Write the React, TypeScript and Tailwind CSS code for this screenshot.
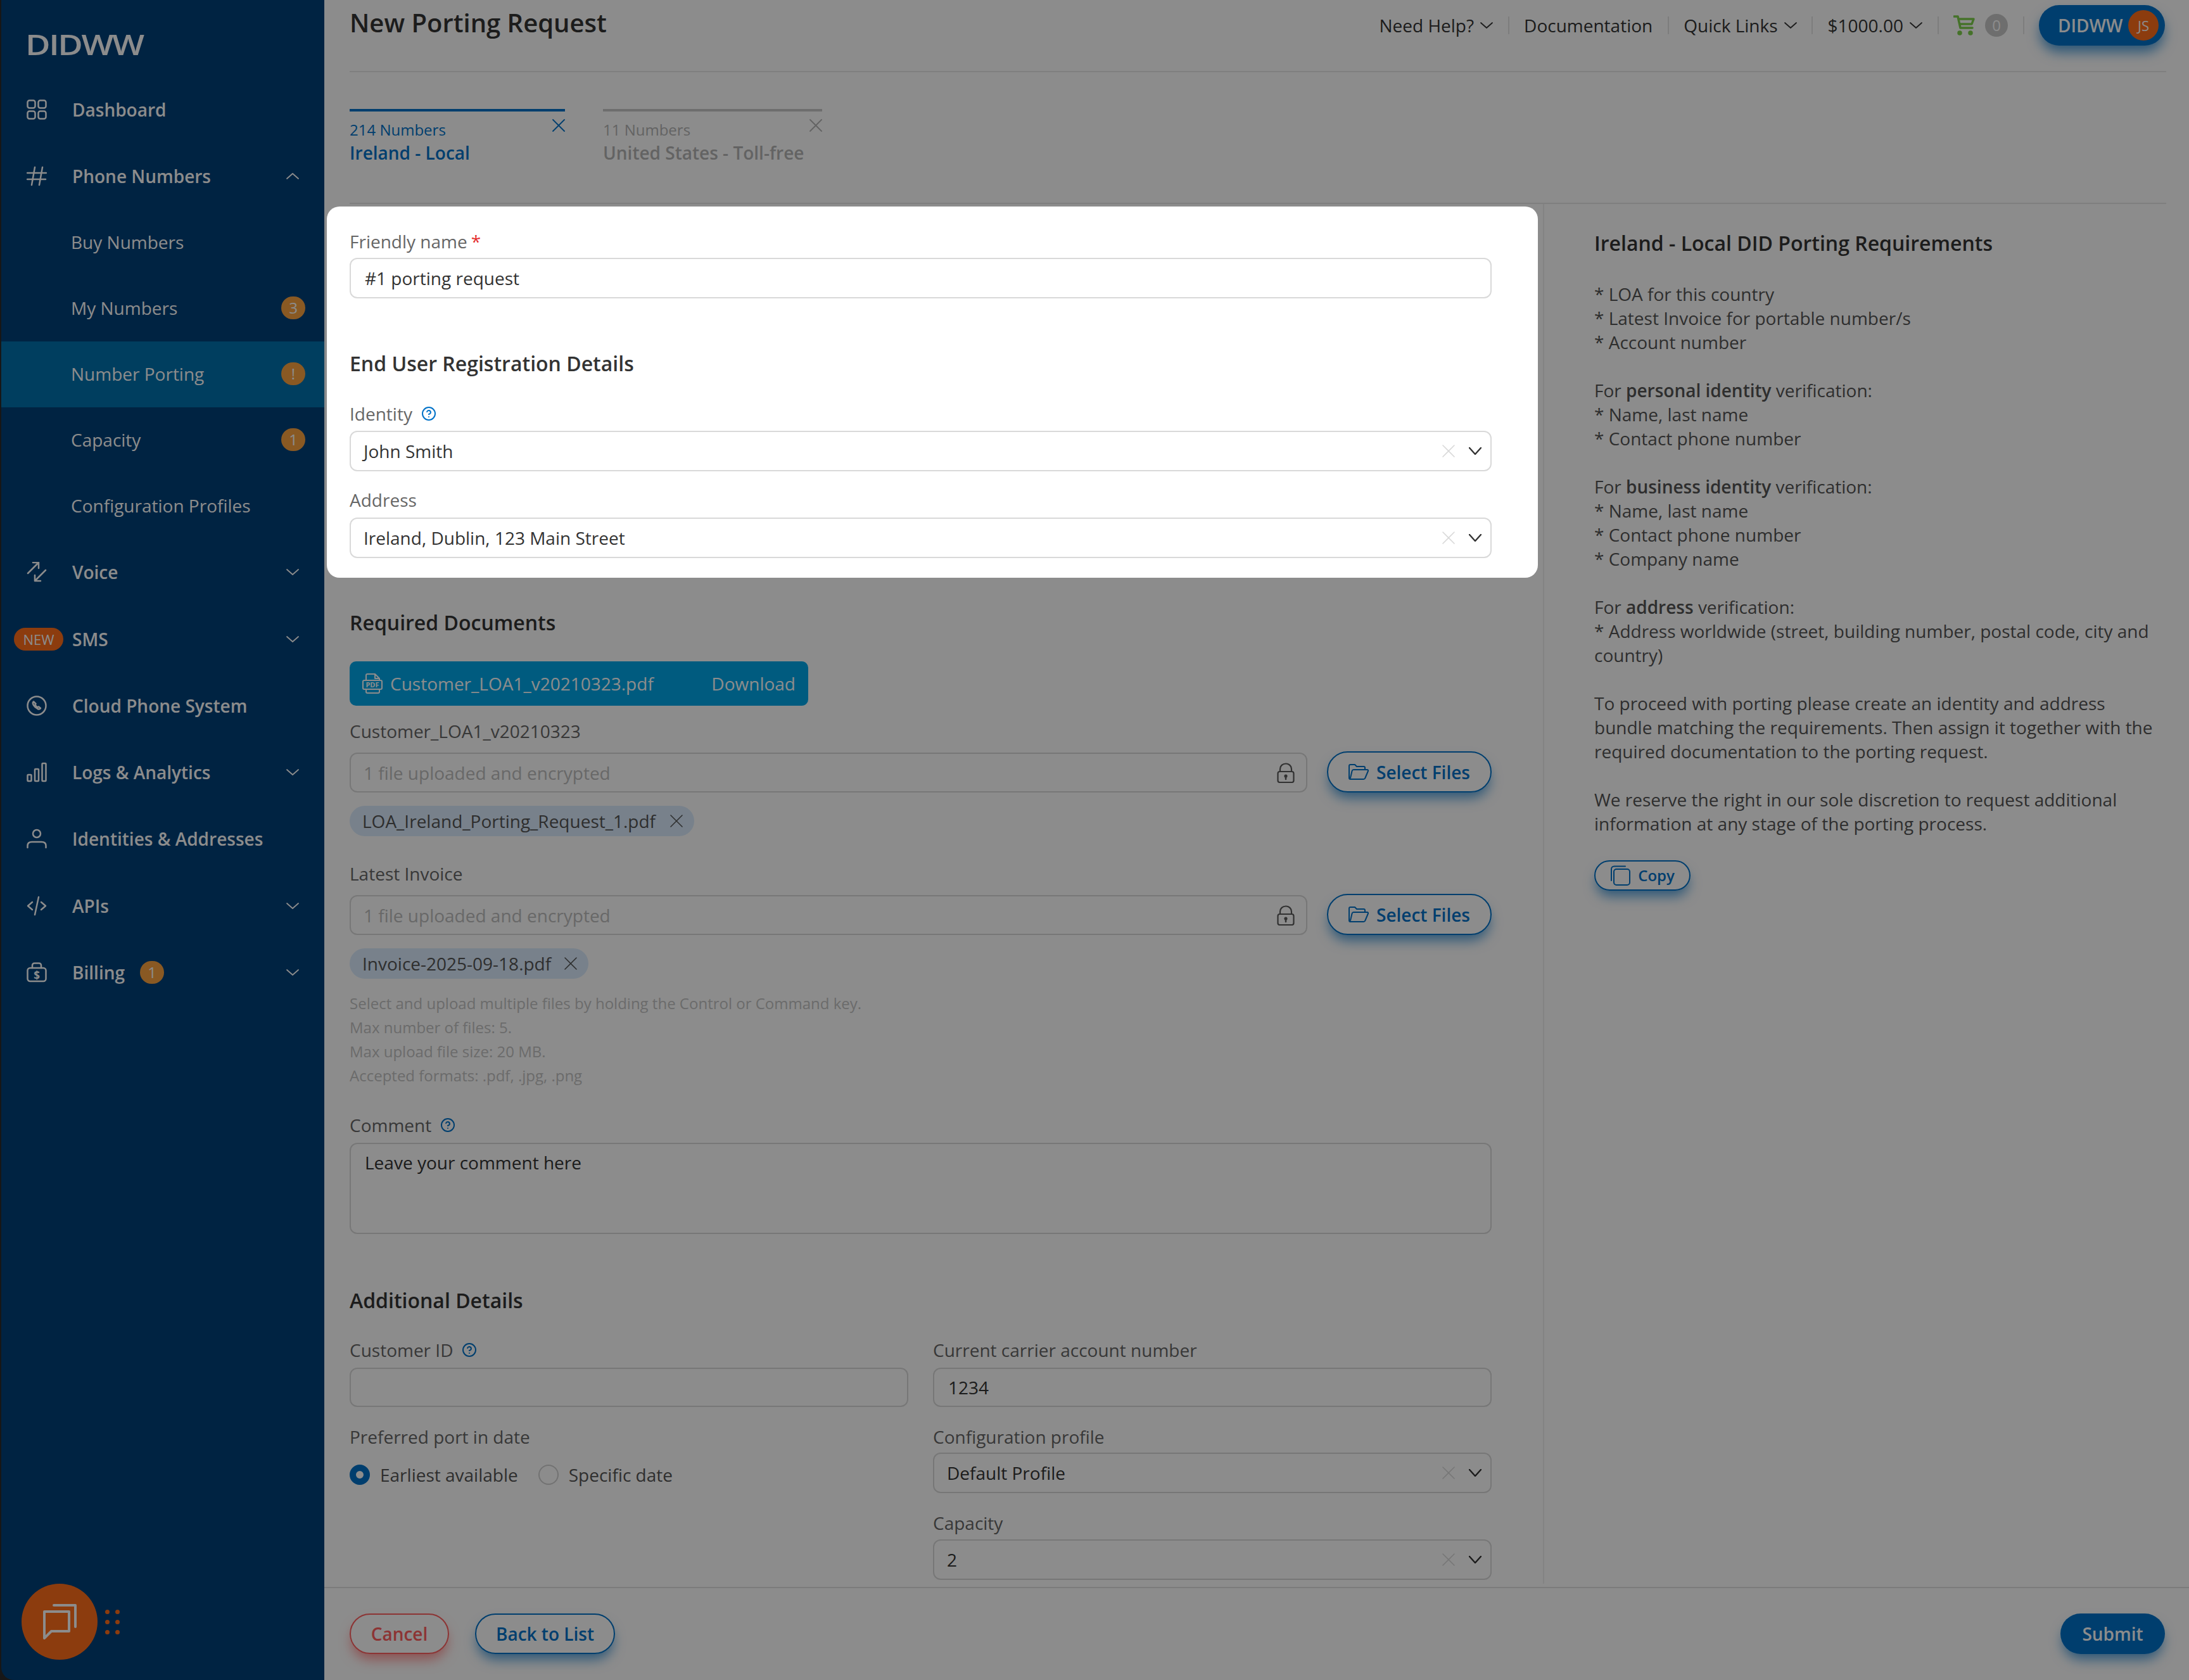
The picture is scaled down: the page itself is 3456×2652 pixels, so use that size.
import React from "react";
import { CircleHelp } from "lucide-react";

const Svg = ({ w = 32, h = 32, children, className = "", sw = 2.5 }: { w?: number; h?: number; children: React.ReactNode; className?: string; sw?: number }) => (
  <svg width={w} height={h} viewBox={`0 0 ${w} ${h}`} fill="none" stroke="currentColor" strokeWidth={sw} strokeLinecap="round" strokeLinejoin="round" className={`shrink-0 ${className}`}>
    {children}
  </svg>
);

const Chev = ({ up = false, w = 20, h = 10, sw = 1.8, className = "" }: { up?: boolean; w?: number; h?: number; sw?: number; className?: string }) => (
  <Svg w={w} h={h} sw={sw} className={className}>
    {up ? <polyline points={`1,${h - 1} ${w / 2},1 ${w - 1},${h - 1}`} /> : <polyline points={`1,1 ${w / 2},${h - 1} ${w - 1},1`} />}
  </Svg>
);

const XIcon = ({ s = 20, sw = 2, className = "" }: { s?: number; sw?: number; className?: string }) => (
  <Svg w={s} h={s} sw={sw} className={className}>
    <line x1="1" y1="1" x2={s - 1} y2={s - 1} />
    <line x1={s - 1} y1="1" x2="1" y2={s - 1} />
  </Svg>
);

const icons: Record<string, React.ReactNode> = {
  dash: (
    <>
      <rect x="1.500" y="1.500" width="12" height="12" rx="3" />
      <rect x="18.500" y="1.500" width="12" height="12" rx="3" />
      <rect x="1.500" y="18.500" width="12" height="12" rx="3" />
      <rect x="18.500" y="18.500" width="12" height="12" rx="3" />
    </>
  ),
  hash: <path d="M1 11h30M1 21h29M13 2 8 30M25 2l-5 28" />,
  voice: <path d="M2 18 19 1M10 1h9v9M30 13 13 30M13 21v9h9" />,
  phone: (
    <>
      <circle cx="16" cy="16" r="14.500" />
      <path d="M11 9.500c-1.500 1-1.500 3 0 5.500 1.500 2.500 3.500 4.500 6.500 6 2 .8 3.500.5 4.500-1l-3-2.500-1.500 1c-1.500-.7-3-2.200-4-4l1-1.500z" />
    </>
  ),
  bars: (
    <>
      <rect x="1.500" y="20" width="6" height="10" rx="1" />
      <rect x="13" y="11" width="6" height="19" rx="1" />
      <rect x="24.500" y="2" width="6" height="28" rx="1" />
    </>
  ),
  user: (
    <>
      <circle cx="16" cy="8" r="6" />
      <path d="M1.500 30v-3c0-4 3-6 7-6h15c4 0 7 2 7 6v3" />
    </>
  ),
  code: <path d="M9 10 2 16l7 6M23 10l7 6-7 6M19 2l-6 28" />,
  bill: (
    <>
      <rect x="1.500" y="9" width="29" height="21" rx="4" />
      <path d="M9 9V5c0-2 1.500-3.500 3.500-3.500h7C21.500 1.500 23 3 23 5v4" />
      <text x="16" y="27" textAnchor="middle" fontSize="17" fontWeight="700" fill="currentColor" stroke="none" fontFamily="'Open Sans',sans-serif">$</text>
    </>
  ),
};

const Badge = ({ t, className = "" }: { t: string; className?: string }) => (
  <span className={`w-[38px] h-[36px] rounded-full bg-[#faa340] text-white text-[24px] leading-[36px] text-center ${className}`}>{t}</span>
);

const Main = ({ icon, label, chev, up, badge, newTag }: { icon?: string; label: string; chev?: boolean; up?: boolean; badge?: string; newTag?: boolean }) => (
  <div className="relative flex items-center h-[105.3px] pl-[40px] pr-[40px] text-white">
    {newTag ? (
      <span className="absolute left-[20px] w-[78px] h-[36px] rounded-full bg-[#ff6e1b] text-[22px] leading-[36px] text-center">NEW</span>
    ) : (
      <Svg>{icon && icons[icon]}</Svg>
    )}
    <span className={`${newTag ? "ml-[72px]" : "ml-[40px]"} text-[28px] font-semibold`}>{label}</span>
    {badge && <Badge t={badge} className="ml-[24px]" />}
    {chev && <Chev up={up} className="ml-auto" />}
  </div>
);

const Sub = ({ label, badge, active }: { label: string; badge?: string; active?: boolean }) => (
  <div className={`flex items-center h-[104px] pb-[2px] pl-[110px] pr-[30px] text-white text-[28px] ${active ? "bg-[#0071ad]" : ""}`}>
    <span>{label}</span>
    {badge && <Badge t={badge} className="ml-auto" />}
  </div>
);

const Label = ({ children, className = "" }: { children: React.ReactNode; className?: string }) => (
  <div className={`text-[28px] leading-[38px] text-[#666] flex items-center ${className}`}>{children}</div>
);

const Help = () => <CircleHelp size={24} strokeWidth={2} className="ml-[14px] text-[#0072c8]" />;

const Field = ({ value, className = "" }: { value?: string; className?: string }) => (
  <div className={`h-[64px] border-2 border-[#d9d9d9] rounded-[12px] bg-white pl-[22px] flex items-center text-[28px] text-[#333] ${className}`}>{value}</div>
);

const Select = ({ value, className = "" }: { value: string; className?: string }) => (
  <div className={`h-[64px] border-2 border-[#d9d9d9] rounded-[12px] bg-white pl-[20px] pr-[14px] flex items-center text-[28px] text-[#333] ${className}`}>
    <span>{value}</span>
    <XIcon s={20} sw={1.6} className="ml-auto text-[#d9d9d9]" />
    <Chev sw={2.4} h={12} className="ml-[22px] text-[#333]" />
  </div>
);

const Upload = ({ tag, tagW, className = "" }: { tag: string; tagW: string; className?: string }) => (
  <>
    <div className={`flex items-end mt-[13px] ${className}`}>
      <div className="w-[1512px] h-[63px] border-2 border-[#d9d9d9] rounded-[12px] pl-[20px] pr-[18px] flex items-center text-[28px] text-[#bdbdbd]">
        <span>1 file uploaded and encrypted</span>
        <Svg w={28} h={32} sw={2.2} className="ml-auto text-[#5a5a5a]">
          <rect x="1.500" y="14" width="25" height="17" rx="3" />
          <path d="M5 14V10c0-5 4-8.500 9-8.500s9 3.500 9 8.500v4" />
          <path d="M14 21v5" strokeWidth="2.500" />
          <circle cx="14" cy="21" r="1.500" fill="currentColor" />
        </Svg>
      </div>
      <button className="ml-[31px] w-[260px] h-[65px] rounded-full border-2 border-[#0072c8] text-[#0072c8] font-semibold text-[28px] flex items-center justify-center gap-[12px] shadow-[0_12px_20px_-4px_rgba(0,114,200,0.7)]">
        <Svg w={32} h={26} sw={2}>
          <path d="M3 24c-1 0-2-1-2-2V3c0-1 1-2 2-2h7l3 3h11c1 0 2 1 2 2v3" />
          <path d="M3 24h21c1 0 2-.7 2.400-2L31 11c.3-1-.3-2-1.500-2H8c-1 0-2 .7-2.400 2L3 22" />
        </Svg>
        Select Files
      </button>
    </div>
    <div className={`mt-[21px] h-[48px] ${tagW} rounded-full bg-[#daecfe] pl-[20px] pr-[18px] flex items-center text-[28px] text-[#555]`}>
      <span>{tag}</span>
      <XIcon s={20} sw={1.6} className="ml-auto text-[#555]" />
    </div>
  </>
);

const H = ({ children, className = "" }: { children: React.ReactNode; className?: string }) => (
  <h2 className={`text-[32px] leading-[44px] font-semibold text-[#333] ${className}`}>{children}</h2>
);

const Tab = ({ top, name, active, w }: { top: string; name: string; active?: boolean; w: string }) => (
  <div className={`${w} border-t-4 ${active ? "border-[#0072c8]" : "border-[#c8c8c8]"} flex justify-between items-start`}>
    <div className={active ? "text-[#0072c8]" : "text-[#b5b5b5]"}>
      <div className="mt-[13px] text-[24px] leading-[32px]">{top}</div>
      <div className="mt-[1px] text-[28px] leading-[38px] font-semibold">{name}</div>
    </div>
    <XIcon s={20} sw={1.8} className={`mt-[12px] ${active ? "text-[#0072c8]" : "text-[#b5b5b5]"}`} />
  </div>
);

const Sep = () => <span className="w-[2px] h-[28px] bg-[#e4e4e4]" />;

const Req = () => (
  <div className="text-[28px] leading-[38px] text-[#555]">
    <p>* LOA for this country</p>
    <p>* Latest Invoice for portable number/s</p>
    <p>* Account number</p>
    <p className="mt-[38px]">For <b className="font-semibold">personal identity</b> verification:</p>
    <p>* Name, last name</p>
    <p>* Contact phone number</p>
    <p className="mt-[38px]">For <b className="font-semibold">business identity</b> verification:</p>
    <p>* Name, last name</p>
    <p>* Contact phone number</p>
    <p>* Company name</p>
    <p className="mt-[38px]">For <b className="font-semibold">address</b> verification:</p>
    <p>* Address worldwide (street, building number, postal code, city and country)</p>
    <p className="mt-[38px]">To proceed with porting please create an identity and address bundle matching the requirements. Then assign it together with the required documentation to the porting request.</p>
    <p className="mt-[38px]">We reserve the right in our sole discretion to request additional information at any stage of the porting process.</p>
  </div>
);

export default function App() {
  return (
    <div className="relative w-[3456px] h-[2652px] overflow-hidden flex bg-[#2a2a2a] font-['Open_Sans',sans-serif] text-[#333]">
      {/* Sidebar */}
      <aside className="ml-[2px] w-[510px] shrink-0 bg-[#004078] rounded-bl-[20px]">
        <div className="h-[120px] pl-[38px] pt-[44px]">
          <div className="text-[45px] leading-[52px] text-white font-semibold tracking-[-2px] origin-left scale-x-[1.2]">DIDWW</div>
        </div>
        <Main icon="dash" label="Dashboard" />
        <Main icon="hash" label="Phone Numbers" chev up />
        <Sub label="Buy Numbers" />
        <Sub label="My Numbers" badge="3" />
        <Sub label="Number Porting" badge="!" active />
        <Sub label="Capacity" badge="1" />
        <Sub label="Configuration Profiles" />
        <Main icon="voice" label="Voice" chev />
        <Main newTag label="SMS" chev />
        <Main icon="phone" label="Cloud Phone System" />
        <Main icon="bars" label="Logs & Analytics" chev />
        <Main icon="user" label="Identities & Addresses" />
        <Main icon="code" label="APIs" chev />
        <Main icon="bill" label="Billing" badge="1" chev />
      </aside>

      {/* Main */}
      <main className="flex-1 min-w-0 bg-white flex flex-col">
        <div className="flex-1 min-h-0 pl-[40px] pr-[36px] overflow-hidden">
          <header className="h-[114px] border-b-2 border-[#e8e8e8] flex justify-between items-start">
            <h1 className="mt-[9px] text-[40px] leading-[54px] font-semibold text-[#333]">New Porting Request</h1>
            <div className="mt-[8px] mr-[2px] h-[64px] flex items-center gap-[23.500px] text-[28px] text-[#333]">
              <span className="flex items-center gap-[10px]">Need Help? <Chev /></span>
              <Sep />
              <span>Documentation</span>
              <Sep />
              <span className="flex items-center gap-[10px]">Quick Links <Chev /></span>
              <Sep />
              <span className="flex items-center gap-[10px]">$1000.00 <Chev /></span>
              <Sep />
              <span className="flex items-center gap-[16px]">
                <Svg w={34} h={32} sw={3.5} className="text-[#7fd04c]">
                  <path d="M1 2h6l4 18h19" />
                  <path d="M8.500 6H32l-3 8H10" />
                  <circle cx="10" cy="28" r="2" fill="currentColor" />
                  <circle cx="27" cy="28" r="2" fill="currentColor" />
                </Svg>
                <span className="w-[36px] h-[36px] rounded-full bg-[#c8c8c8] text-white text-[24px] leading-[36px] text-center">0</span>
              </span>
              <Sep />
              <span className="w-[199px] h-[64px] rounded-full bg-[#0072c8] text-white font-semibold pl-[30px] pr-[10px] flex items-center justify-between shadow-[0_12px_20px_-2px_rgba(0,114,200,0.7)]">
                DIDWW
                <span className="w-[48px] h-[48px] rounded-full bg-[#ff6e1b] text-[22px] font-normal leading-[48px] text-center">JS</span>
              </span>
            </div>
          </header>

          <section className="h-[208px] border-b-2 border-[#e8e8e8] pt-[58px] flex gap-[60px]">
            <Tab w="w-[340px]" top="214 Numbers" name="Ireland - Local" active />
            <Tab w="w-[346px]" top="11 Numbers" name="United States - Toll-free" />
          </section>

          <div className="flex h-[2183px]">
            {/* Form */}
            <div className="w-[1803px] shrink-0">
              <div className="relative z-20 mt-[4px] -ml-[36px] w-[1912px] bg-white rounded-[20px] pl-[36px] pr-[73px] pt-[36px] pb-[31px]">
                <Label>Friendly name<span className="ml-[6px] text-[#e53030]">*</span></Label>
                <Field value="#1 porting request" className="mt-[7px]" />
                <H className="mt-[81px]">End User Registration Details</H>
                <Label className="mt-[38px]">Identity<Help /></Label>
                <Select value="John Smith" className="mt-[8px]" />
                <Label className="mt-[26px]">Address</Label>
                <Select value="Ireland, Dublin, 123 Main Street" className="mt-[9px]" />
              </div>

              <H className="mt-[49px]">Required Documents</H>
              <div className="mt-[39px] w-[724px] h-[70px] rounded-[10px] bg-[#00a7e8] text-white text-[28px] pl-[20px] pr-[20px] flex items-center">
                <Svg w={32} h={32} sw={2}>
                  <path d="M6 10V3c0-1 1-2 2-2h12l7 7v2M6 26v3c0 1 1 2 2 2h17c1 0 2-1 2-2v-3M20 1v7h7" />
                  <rect x="1" y="11" width="30" height="14" rx="2" />
                  <text x="16" y="22" textAnchor="middle" fontSize="11" fontWeight="700" fill="currentColor" stroke="none" fontFamily="'Open Sans',sans-serif">PDF</text>
                </Svg>
                <span className="ml-[12px]">Customer_LOA1_v20210323.pdf</span>
                <span className="ml-auto">Download</span>
              </div>
              <Label className="mt-[21px]">Customer_LOA1_v20210323</Label>
              <Upload tag="LOA_Ireland_Porting_Request_1.pdf" tagW="w-[544px]" />
              <Label className="mt-[40px]">Latest Invoice</Label>
              <Upload tag="Invoice-2025-09-18.pdf" tagW="w-[377px]" />
              <div className="mt-[20px] text-[24px] leading-[38px] text-[#c4c4c4]">
                <p>Select and upload multiple files by holding the Control or Command key.</p>
                <p>Max number of files: 5.</p>
                <p>Max upload file size: 20 MB.</p>
                <p>Accepted formats: .pdf, .jpg, .png</p>
              </div>
              <Label className="mt-[40px]">Comment<Help /></Label>
              <div className="mt-[9px] h-[144px] border-2 border-[#d9d9d9] rounded-[12px] pl-[22px] pt-[10px] text-[28px] leading-[38px] text-[#333]">Leave your comment here</div>
              <H className="mt-[83px]">Additional Details</H>
              <div className="mt-[37px] flex gap-[39px]">
                <div className="w-[882px]">
                  <Label>Customer ID<Help /></Label>
                  <Field className="mt-[9px] !h-[62px]" />
                  <Label className="mt-[28px]">Preferred port in date</Label>
                  <div className="mt-[20px] flex items-center text-[28px] text-[#555]">
                    <span className="w-[32px] h-[32px] rounded-full border-[10px] border-[#0072c8] bg-white" />
                    <span className="ml-[16px]">Earliest available</span>
                    <span className="ml-[32px] w-[32px] h-[32px] rounded-full border-2 border-[#d0d0d0]" />
                    <span className="ml-[16px]">Specific date</span>
                  </div>
                </div>
                <div className="w-[882px]">
                  <Label>Current carrier account number</Label>
                  <Field value="1234" className="mt-[9px] !h-[62px]" />
                  <Label className="mt-[28px]">Configuration profile</Label>
                  <Select value="Default Profile" className="mt-[6px]" />
                  <Label className="mt-[28px]">Capacity</Label>
                  <Select value="2" className="mt-[7px]" />
                </div>
              </div>
            </div>

            {/* Requirements */}
            <div className="ml-[81px] mb-[5px] flex-1 border-l-2 border-[#eeeeee] pl-[79px] pt-[40px]">
              <H>Ireland - Local DID Porting Requirements</H>
              <div className="mt-[39px]"><Req /></div>
              <button className="mt-[39px] w-[152px] h-[48px] rounded-full border-2 border-[#0072c8] text-[#0072c8] text-[24px] font-semibold flex items-center justify-center gap-[12px] shadow-[0_12px_20px_-4px_rgba(0,114,200,0.7)]">
                <Svg w={32} h={32} sw={2}>
                  <rect x="6" y="6" width="25" height="25" rx="4" />
                  <path d="M2 24V6c0-2.500 2-4.500 4.500-4.500H24" />
                </Svg>
                Copy
              </button>
            </div>
          </div>
        </div>

        <footer className="h-[147px] shrink-0 border-t-2 border-[#e0e0e0] pl-[40px] pr-[38px] pt-[40px] flex items-start text-[28px] font-semibold">
          <button className="w-[157px] h-[64px] rounded-full border-2 border-[#ff6060] text-[#ff6060] shadow-[0_12px_20px_-4px_rgba(255,96,96,0.7)]">Cancel</button>
          <button className="ml-[41px] w-[221px] h-[64px] rounded-full border-2 border-[#0072c8] text-[#0072c8] shadow-[0_12px_20px_-4px_rgba(0,114,200,0.7)]">Back to List</button>
          <button className="ml-auto w-[165px] h-[64px] rounded-full bg-[#0072c8] text-white shadow-[0_12px_20px_-4px_rgba(0,114,200,0.7)]">Submit</button>
        </footer>
      </main>

      {/* Chat launcher */}
      <div className="absolute left-[34px] top-[2500px] flex items-center">
        <div className="w-[120px] h-[120px] rounded-full bg-[#ff6e1b] flex items-center justify-center text-white">
          <Svg w={54} h={56} sw={4}>
            <path d="M18 2h34v34" />
            <path d="M3 12h39v31H14L3 54z" />
          </Svg>
        </div>
        <div className="ml-[12px] grid grid-cols-2 gap-x-[9px] gap-y-[9px]">
          {[0, 1, 2, 3, 4, 5].map((i) => (
            <span key={i} className="w-[7px] h-[7px] rounded-full bg-[#ff6e1b]" />
          ))}
        </div>
      </div>

      {/* Dimming layer */}
      <div className="absolute inset-0 z-10 bg-black/45 pointer-events-none" />
    </div>
  );
}
